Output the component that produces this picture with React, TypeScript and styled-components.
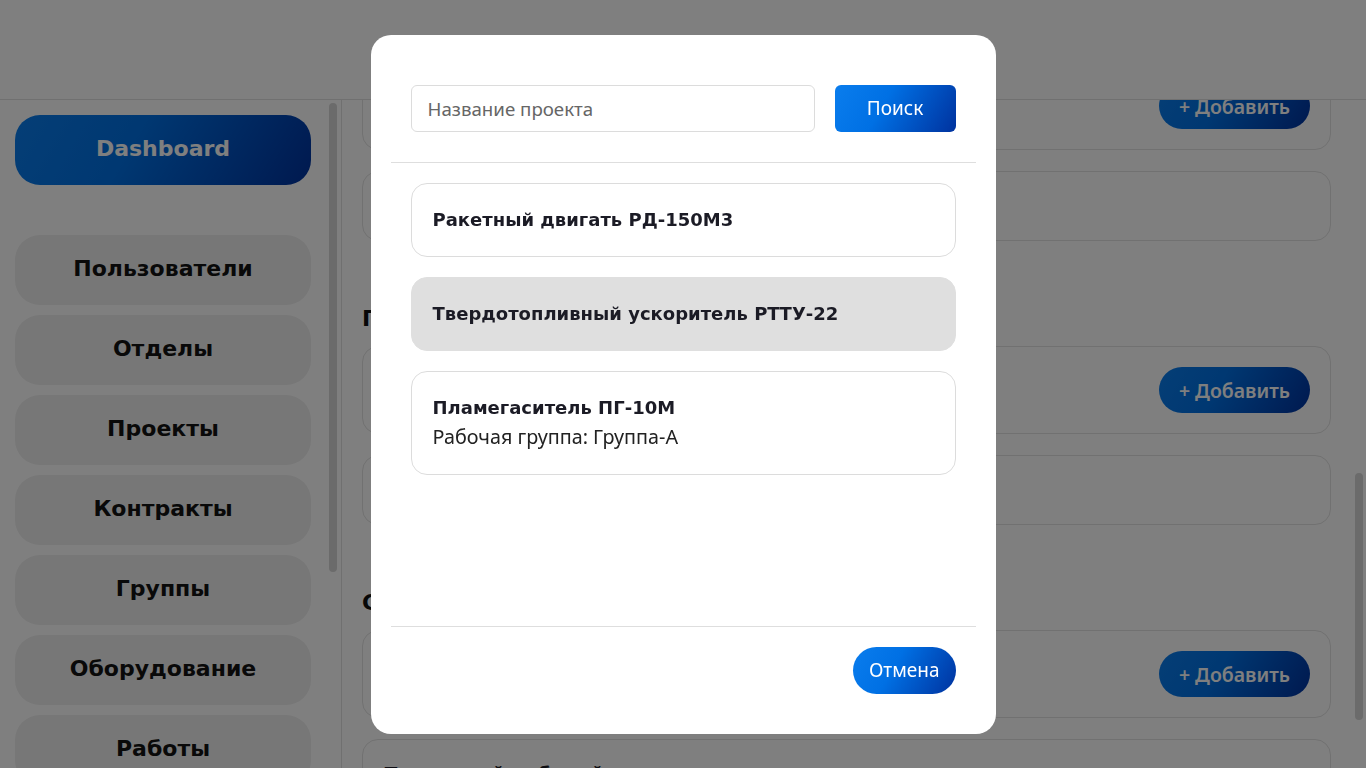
import React, { useLayoutEffect, useRef, useState } from "react";
import styled, { createGlobalStyle } from "styled-components";

const GlobalStyle = createGlobalStyle`
  html, body { margin: 0; padding: 0; height: 100%; overflow: hidden; background: #fff; }
  body { font-family: "Noto Sans", "Open Sans", sans-serif; color: #222; }
  *, *::before, *::after { box-sizing: border-box; }
`;

const blueGradient = "linear-gradient(120deg, #0a7ded 0%, #0070e4 40%, #00329e 100%)";
const wideFont = `"DejaVu Sans", "Liberation Sans", sans-serif`;
const bodyFont = `"Noto Sans", "Open Sans", sans-serif`;

const Page = styled.div`
  display: flex;
  flex-direction: column;
  height: 100vh;
`;

const Header = styled.header`
  height: 100px;
  flex-shrink: 0;
  background: #fff;
  border-bottom: 1px solid #e0e0e0;
`;

const Body = styled.div`
  flex: 1;
  display: flex;
  min-height: 0;
`;

const SidebarPane = styled.aside`
  width: 342px;
  flex-shrink: 0;
  display: flex;
  border-right: 1px solid #e0e0e0;
  min-height: 0;
`;

const MainPane = styled.div`
  flex: 1;
  min-width: 0;
  display: flex;
  min-height: 0;
`;

const ScrollArea = styled.div`
  flex: 1;
  min-width: 0;
  overflow-y: scroll;
  scrollbar-width: none;
  &::-webkit-scrollbar { display: none; }
`;

const ScrollTrack = styled.div<{ $w: number; $left: number }>`
  width: ${(p) => p.$w}px;
  flex-shrink: 0;
  display: flex;
  flex-direction: column;
  padding-left: ${(p) => p.$left}px;
  padding-right: ${(p) => p.$w - p.$left - 8}px;
`;

const ScrollThumb = styled.div`
  width: 8px;
  flex-shrink: 0;
  border-radius: 4px;
  background: #d6d6d6;
`;

const SidebarInner = styled.nav`
  display: flex;
  flex-direction: column;
  gap: 10px;
  padding: 15px 16px 15px 15px;
`;

const NavButton = styled.button<{ $active?: boolean }>`
  height: 70px;
  flex-shrink: 0;
  border: none;
  border-radius: 25px;
  padding: 0 0 3px;
  background: ${(p) => (p.$active ? blueGradient : "#eeeeee")};
  color: ${(p) => (p.$active ? "#ffffff" : "#121212")};
  font-family: ${wideFont};
  font-weight: 700;
  font-size: 22px;
  margin-bottom: ${(p) => (p.$active ? "40px" : "0")};
  cursor: pointer;
`;

const MainInner = styled.main`
  display: flex;
  flex-direction: column;
  gap: 65px;
  padding: 78px 20px 89px 20px;
`;

const Section = styled.section`
  display: flex;
  flex-direction: column;
`;

const SectionTitle = styled.h3`
  margin: 0 0 14px;
  font-family: ${wideFont};
  font-weight: 700;
  font-size: 22px;
  line-height: 26px;
  color: #111;
`;

const CardList = styled.div`
  display: flex;
  flex-direction: column;
  gap: 21px;
`;

const Card = styled.div<{ $tall?: boolean }>`
  height: ${(p) => (p.$tall ? "88px" : "70px")};
  display: flex;
  align-items: center;
  justify-content: space-between;
  padding: 0 20px;
  border: 1px solid #e2e2e2;
  border-radius: 16px;
  background: #fff;
`;

const CardText = styled.span`
  font-family: ${wideFont};
  font-weight: 700;
  font-size: 19px;
  color: #1a1a24;
`;

const AddButton = styled.button`
  height: 46px;
  padding: 0 20px;
  border: none;
  border-radius: 23px;
  background: ${blueGradient};
  color: #fff;
  font-family: ${bodyFont};
  font-weight: 600;
  font-size: 19.5px;
  cursor: pointer;
`;

const Overlay = styled.div`
  position: fixed;
  inset: 0;
  background: rgba(0, 0, 0, 0.5);
  display: flex;
  align-items: center;
  justify-content: center;
`;

const Modal = styled.div`
  width: 625px;
  height: 699px;
  background: #fff;
  border-radius: 20px;
  display: flex;
  flex-direction: column;
`;

const SearchRow = styled.div`
  display: flex;
  gap: 20px;
  padding: 50px 40px 30px;
`;

const SearchInput = styled.input`
  flex: 1;
  min-width: 0;
  height: 47px;
  border: 1px solid #dcdcdc;
  border-radius: 6px;
  padding: 0 16px;
  font-family: ${bodyFont};
  font-size: 18.7px;
  color: #333;
  outline: none;
  &::placeholder { color: #666; }
`;

const SearchButton = styled.button`
  width: 121px;
  height: 47px;
  border: none;
  border-radius: 6px;
  background: ${blueGradient};
  color: #fff;
  font-family: ${bodyFont};
  font-size: 19px;
  cursor: pointer;
`;

const Divider = styled.hr`
  margin: 0 20px;
  border: none;
  border-top: 1px solid #dedede;
  flex-shrink: 0;
`;

const ResultList = styled.div`
  flex: 1;
  display: flex;
  flex-direction: column;
  gap: 20px;
  padding: 20px 40px;
`;

const ResultItem = styled.div<{ $hovered?: boolean }>`
  padding: 22px 21px;
  border: 1px solid ${(p) => (p.$hovered ? "#dfdfdf" : "#dcdcdc")};
  border-radius: 16px;
  background: ${(p) => (p.$hovered ? "#dfdfdf" : "#fff")};
  cursor: pointer;
`;

const ResultTitle = styled.div`
  font-family: ${wideFont};
  font-weight: 700;
  font-size: 18px;
  line-height: 28px;
  color: #1b1b25;
`;

const ResultSub = styled.div`
  font-family: ${bodyFont};
  font-size: 19.8px;
  line-height: 30px;
  color: #222;
`;

const Footer = styled.div`
  display: flex;
  justify-content: flex-end;
  padding: 20px 40px 40px;
`;

const CancelButton = styled.button`
  height: 47px;
  padding: 0 16px;
  border: none;
  border-radius: 24px;
  background: ${blueGradient};
  color: #fff;
  font-family: ${bodyFont};
  font-size: 19px;
  cursor: pointer;
`;

const navItems = [
  "Пользователи",
  "Отделы",
  "Проекты",
  "Контракты",
  "Группы",
  "Оборудование",
  "Работы",
  "Отчёты",
  "Настройки",
  "Выход",
];

const sections = [
  { title: "Пользователи", add: "Новый пользователь", empty: "Список пользователей" },
  { title: "Отделы", add: "Новый отдел", empty: "Список отделов" },
  { title: "Группы", add: "Новая группа", empty: "Список групп" },
  { title: "Оборудование", add: "Новое оборудование", empty: "Список оборудования" },
  { title: "Проекты", add: "Новый проект", empty: "Список проектов" },
  { title: "Сотрудники", add: "Новый сотрудник", empty: "Последний рабочий день" },
];

const results = [
  { title: "Ракетный двигать РД-150М3" },
  { title: "Твердотопливный ускоритель РТТУ-22", hovered: true },
  { title: "Пламегаситель ПГ-10М", sub: "Рабочая группа: Группа-А" },
];

type Thumb = { top: number; height: number };

function measure(el: HTMLElement | null, inset: number): Thumb {
  if (!el) return { top: 0, height: 0 };
  const track = el.clientHeight;
  const total = el.scrollHeight || 1;
  const height = (el.clientHeight / total) * track;
  const top = (el.scrollTop / total) * track;
  return { top: top + inset, height: Math.max(0, height - inset * 2) };
}

export default function App() {
  const mainRef = useRef<HTMLDivElement>(null);
  const sideRef = useRef<HTMLDivElement>(null);
  const [sideThumb, setSideThumb] = useState<Thumb>({ top: 3, height: 469 });
  const [mainThumb, setMainThumb] = useState<Thumb>({ top: 373, height: 247 });

  useLayoutEffect(() => {
    if (mainRef.current) mainRef.current.scrollTop = 1008;
    setSideThumb(measure(sideRef.current, 3));
    setMainThumb(measure(mainRef.current, 0));
  }, []);

  return (
    <>
      <GlobalStyle />
      <Page>
        <Header />
        <Body>
          <SidebarPane>
            <ScrollArea ref={sideRef}>
              <SidebarInner>
                <NavButton $active>Dashboard</NavButton>
                {navItems.map((n) => (
                  <NavButton key={n}>{n}</NavButton>
                ))}
              </SidebarInner>
            </ScrollArea>
            <ScrollTrack $w={14} $left={2}>
              <ScrollThumb style={{ marginTop: sideThumb.top, height: sideThumb.height }} />
            </ScrollTrack>
          </SidebarPane>
          <MainPane>
            <ScrollArea ref={mainRef}>
              <MainInner>
                {sections.map((s) => (
                  <Section key={s.title}>
                    <SectionTitle>{s.title}</SectionTitle>
                    <CardList>
                      <Card $tall>
                        <CardText>{s.add}</CardText>
                        <AddButton>+ Добавить</AddButton>
                      </Card>
                      <Card>
                        <CardText>{s.empty}</CardText>
                      </Card>
                    </CardList>
                  </Section>
                ))}
              </MainInner>
            </ScrollArea>
            <ScrollTrack $w={15} $left={4}>
              <ScrollThumb style={{ marginTop: mainThumb.top, height: mainThumb.height }} />
            </ScrollTrack>
          </MainPane>
        </Body>
      </Page>
      <Overlay>
        <Modal>
          <SearchRow>
            <SearchInput placeholder="Название проекта" />
            <SearchButton>Поиск</SearchButton>
          </SearchRow>
          <Divider />
          <ResultList>
            {results.map((r) => (
              <ResultItem key={r.title} $hovered={r.hovered}>
                <ResultTitle>{r.title}</ResultTitle>
                {r.sub && <ResultSub>{r.sub}</ResultSub>}
              </ResultItem>
            ))}
          </ResultList>
          <Divider />
          <Footer>
            <CancelButton>Отмена</CancelButton>
          </Footer>
        </Modal>
      </Overlay>
    </>
  );
}
